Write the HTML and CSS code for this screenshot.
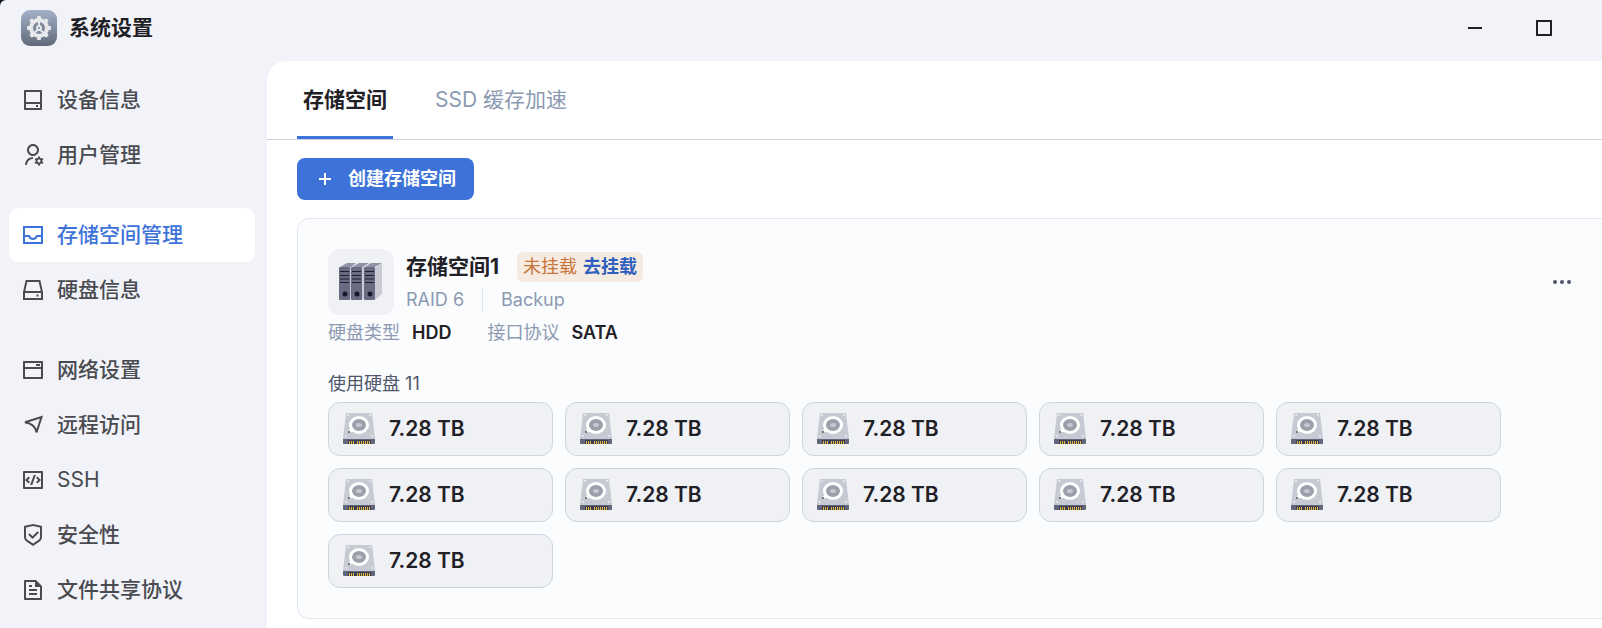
FILE: index.html
```html
<!DOCTYPE html>
<html lang="zh-CN">

<head>
    <meta charset="UTF-8">
    <meta name="viewport" content="width=device-width, initial-scale=1.0">
    <title>系统设置</title>
    <link rel="stylesheet" href="styles.css">
</head>

<body>
    <!-- 图标定义 -->
    <svg class="sprite" aria-hidden="true">
        <symbol id="icon-disk" viewBox="0 0 32 32">
            <path d="M3 0h26l3 26H0z" fill="#c7cad2" />
            <path d="M0 26h32v4a1 1 0 0 1-1 1H1a1 1 0 0 1-1-1z" fill="#62667c" />
            <path d="M5 27h23v4H5z" fill="#3b3d50" />
            <path d="M6 28h1v3H6zM8 28h1v3H8zM10 28h1v3h-1zM14 28h1v3h-1zM16 28h1v3h-1zM18 28h1v3h-1zM20 28h1v3h-1zM22 28h1v3h-1zM24 28h1v3h-1zM26 28h1v3h-1z" fill="#e5b93c" />
            <circle cx="5" cy="2" r="1" fill="#eceef2" />
            <circle cx="27" cy="2" r="1" fill="#eceef2" />
            <circle cx="3" cy="23" r="1" fill="#eceef2" />
            <circle cx="29" cy="23" r="1" fill="#eceef2" />
            <path d="M8 14l-3 6 6-2z" fill="#fff" />
            <ellipse cx="16" cy="12" rx="10" ry="9" fill="#fff" />
            <ellipse cx="16" cy="12" rx="7" ry="6" fill="#9b9faa" />
            <ellipse cx="16" cy="12" rx="3" ry="2" fill="#c5c8d0" />
            <circle cx="6" cy="19" r="1" fill="#555" />
        </symbol>
    </svg>

    <div class="window">
        <header class="titlebar">
            <svg class="app-logo" viewBox="0 0 36 36" aria-hidden="true">
                <defs>
                    <linearGradient id="logoBg" x1="0" y1="0" x2="0" y2="1">
                        <stop offset="0" stop-color="#a3b1c8" />
                        <stop offset="1" stop-color="#606a7a" />
                    </linearGradient>
                </defs>
                <rect width="36" height="36" rx="9" fill="url(#logoBg)" />
                <g fill="#e6e8eb">
                    <rect x="16" y="6" width="4" height="24" rx="1" />
                    <rect x="16" y="6" width="4" height="24" rx="1" transform="rotate(45 18 18)" />
                    <rect x="16" y="6" width="4" height="24" rx="1" transform="rotate(90 18 18)" />
                    <rect x="16" y="6" width="4" height="24" rx="1" transform="rotate(135 18 18)" />
                    <circle cx="18" cy="18" r="10" />
                </g>
                <circle cx="18" cy="18" r="6" fill="#7d889a" />
                <path d="M18 11v6M18 19l-5 4M18 19l5 4" stroke="#e6e8eb" stroke-width="2" />
                <circle cx="18" cy="18" r="3" fill="#e6e8eb" />
                <circle cx="18" cy="18" r="1" fill="#7d889a" />
            </svg>
            <h1>系统设置</h1>
            <div class="window-controls">
                <button type="button" aria-label="最小化">
                    <svg viewBox="0 0 16 16"><path d="M1 8h14" /></svg>
                </button>
                <button type="button" aria-label="最大化">
                    <svg viewBox="0 0 16 16"><path d="M1 1h14v14H1z" /></svg>
                </button>
            </div>
        </header>

        <div class="layout">
            <!-- 侧边栏 -->
            <nav class="sidebar">
                <div class="nav-group">
                    <a href="#" class="nav-item">
                        <svg viewBox="0 0 24 24"><path d="M5 14H19V4H5V14ZM5 16V20H19V16H5ZM4 2H20C20.55 2 21 2.45 21 3V21C21 21.55 20.55 22 20 22H4C3.450 22 3 21.550 3 21V3C3 2.450 3.450 2 4 2ZM15 17H17V19H15V17Z" /></svg>
                        设备信息
                    </a>
                    <a href="#" class="nav-item">
                        <svg viewBox="0 0 24 24"><path d="M12 14V16C8.686 16 6 18.686 6 22H4C4 17.582 7.582 14 12 14ZM12 13C8.685 13 6 10.315 6 7C6 3.685 8.685 1 12 1C15.315 1 18 3.685 18 7C18 10.315 15.315 13 12 13ZM12 11C14.21 11 16 9.21 16 7C16 4.79 14.21 3 12 3C9.79 3 8 4.79 8 7C8 9.21 9.79 11 12 11ZM14.595 18.812C14.533 18.551 14.5 18.279 14.5 18C14.5 17.721 14.533 17.449 14.595 17.189L13.603 16.616L14.603 14.884L15.595 15.457C15.988 15.085 16.468 14.803 17 14.645V13.5H19V14.645C19.532 14.803 20.012 15.085 20.405 15.457L21.397 14.884L22.397 16.616L21.406 17.189C21.467 17.449 21.5 17.721 21.5 18C21.5 18.279 21.467 18.551 21.406 18.811L22.397 19.384L21.397 21.116L20.405 20.543C20.012 20.915 19.533 21.197 19 21.355V22.5H17V21.355C16.468 21.197 15.988 20.915 15.595 20.543L14.603 21.116L13.603 19.384L14.595 18.812ZM18 19.5C18.828 19.5 19.5 18.828 19.5 18C19.5 17.172 18.828 16.5 18 16.5C17.172 16.5 16.5 17.172 16.5 18C16.5 18.828 17.172 19.5 18 19.5Z" /></svg>
                        用户管理
                    </a>
                </div>
                <div class="nav-group">
                    <a href="#" class="nav-item active" aria-current="page">
                        <svg viewBox="0 0 24 24" class="stroked"><path d="M3 4h18v16H3zM3 13h5c1 2 2.300 3 4 3s3-1 4-3h5" /></svg>
                        存储空间管理
                    </a>
                    <a href="#" class="nav-item">
                        <svg viewBox="0 0 24 24" class="stroked"><path d="M5.500 3h13L21 14v7H3v-7zM3 14h18M15.500 17.500h2" /></svg>
                        硬盘信息
                    </a>
                </div>
                <div class="nav-group">
                    <a href="#" class="nav-item">
                        <svg viewBox="0 0 24 24"><path d="M3 3H21C21.550 3 22 3.450 22 4V20C22 20.550 21.550 21 21 21H3C2.450 21 2 20.550 2 20V4C2 3.450 2.450 3 3 3ZM20 11H4V19H20V11ZM20 5H4V9H20V5ZM15 6H19V8H15V6Z" /></svg>
                        网络设置
                    </a>
                    <a href="#" class="nav-item">
                        <svg viewBox="0 0 24 24" class="stroked"><path d="M4 9.300L20.500 4L15.500 19.500C15 15 13 11 4 9.300Z" /></svg>
                        远程访问
                    </a>
                    <a href="#" class="nav-item nav-item-latin">
                        <svg viewBox="0 0 24 24"><path d="M3 3H21C21.550 3 22 3.450 22 4V20C22 20.550 21.550 21 21 21H3C2.450 21 2 20.550 2 20V4C2 3.450 2.450 3 3 3ZM4 5V19H20V5H4ZM20 12L16.464 15.536L15.050 14.121L17.172 12L15.050 9.879L16.464 8.464L20 12ZM6.828 12L8.950 14.121L7.536 15.536L4 12L7.536 8.464L8.950 9.879L6.828 12ZM11.244 17H9.116L12.756 7H14.884L11.244 17Z" /></svg>
                        SSH
                    </a>
                    <a href="#" class="nav-item">
                        <svg viewBox="0 0 24 24"><path d="M12 1L20.217 2.826C20.675 2.928 21 3.333 21 3.802V13.789C21 15.795 19.997 17.668 18.328 18.781L12 23L5.672 18.781C4.003 17.668 3 15.795 3 13.789V3.802C3 3.333 3.326 2.928 3.783 2.826L12 1ZM12 3.049L5 4.604V13.789C5 15.126 5.668 16.375 6.781 17.117L12 20.596L17.219 17.117C18.332 16.375 19 15.126 19 13.789V4.604L12 3.049ZM16.452 8.222L17.867 9.636L11.503 16L7.260 11.757L8.674 10.343L11.502 13.171L16.452 8.222Z" /></svg>
                        安全性
                    </a>
                    <a href="#" class="nav-item">
                        <svg viewBox="0 0 24 24"><path d="M21 8V20.993C21 21.550 20.555 22 20.007 22H3.993C3.445 22 3 21.556 3 21.008V2.992C3 2.455 3.449 2 4.002 2H14.997L21 8ZM19 9H14V4H5V20H19V9ZM8 7H11V9H8V7ZM8 11H16V13H8V11ZM8 15H16V17H8V15Z" /></svg>
                        文件共享协议
                    </a>
                </div>
            </nav>

            <!-- 主内容 -->
            <main class="content">
                <div class="tabs" role="tablist">
                    <button type="button" class="tab active" role="tab" aria-selected="true">存储空间</button>
                    <button type="button" class="tab" role="tab" aria-selected="false">SSD 缓存加速</button>
                </div>

                <div class="panel">
                    <button type="button" class="btn-create">
                        <svg viewBox="0 0 14 14" aria-hidden="true"><path d="M7 1v12M1 7h12" /></svg>
                        创建存储空间
                    </button>

                    <section class="pool">
                        <div class="pool-head">
                            <div class="pool-icon">
                                <svg viewBox="0 0 44 40" aria-hidden="true">
                                    <path d="M36 6l7-5v31l-7 6z" fill="#c9cad4" />
                                    <path d="M1 5l7-4h9l-5 4zM13 5l7-4h10l-6 4zM26 5l6-4h11l-7 4z" fill="#9093a5" />
                                    <path d="M11 5h1v32l-1 1zM23 5h2v32l-2 1z" fill="#c9cad4" />
                                    <g id="server">
                                        <rect x="0" y="5" width="11" height="33" rx="1" fill="#696c80" />
                                        <path d="M1 9.500h9M1 13.500h9M1 17h9M1 20.500h9" stroke="#1d1e30" />
                                        <circle cx="6" cy="32" r="2.500" fill="#17182a" />
                                    </g>
                                    <use href="#server" x="12" />
                                    <use href="#server" x="25" />
                                </svg>
                            </div>
                            <div class="pool-title">
                                <div class="pool-name">
                                    <h2>存储空间1</h2>
                                    <span class="badge">未挂载 <a href="#">去挂载</a></span>
                                </div>
                                <div class="pool-type">
                                    <span>RAID 6</span>
                                    <span>Backup</span>
                                </div>
                            </div>
                            <button type="button" class="btn-more" aria-label="更多">
                                <svg viewBox="0 0 24 24">
                                    <circle cx="5" cy="12" r="2" />
                                    <circle cx="12" cy="12" r="2" />
                                    <circle cx="19" cy="12" r="2" />
                                </svg>
                            </button>
                        </div>

                        <dl class="pool-info">
                            <div>
                                <dt>硬盘类型</dt>
                                <dd>HDD</dd>
                            </div>
                            <div>
                                <dt>接口协议</dt>
                                <dd>SATA</dd>
                            </div>
                        </dl>

                        <h3>使用硬盘 11</h3>
                        <ul class="disks">
                            <li><svg><use href="#icon-disk" /></svg>7.28 TB</li>
                            <li><svg><use href="#icon-disk" /></svg>7.28 TB</li>
                            <li><svg><use href="#icon-disk" /></svg>7.28 TB</li>
                            <li><svg><use href="#icon-disk" /></svg>7.28 TB</li>
                            <li><svg><use href="#icon-disk" /></svg>7.28 TB</li>
                            <li><svg><use href="#icon-disk" /></svg>7.28 TB</li>
                            <li><svg><use href="#icon-disk" /></svg>7.28 TB</li>
                            <li><svg><use href="#icon-disk" /></svg>7.28 TB</li>
                            <li><svg><use href="#icon-disk" /></svg>7.28 TB</li>
                            <li><svg><use href="#icon-disk" /></svg>7.28 TB</li>
                            <li><svg><use href="#icon-disk" /></svg>7.28 TB</li>
                        </ul>
                    </section>
                </div>
            </main>
        </div>
    </div>
</body>

</html>
```

FILE: styles.css
```css
* {
    box-sizing: border-box;
}

body {
    margin: 0;
    background: #10131c;
    font-family: Inter, "Noto Sans CJK SC", sans-serif;
    font-size: 18px;
    line-height: 24px;
    color: #1f2126;
    overflow: hidden;
}

h1,
h2,
h3,
ul,
dl,
dd {
    margin: 0;
    padding: 0;
}

button {
    font: inherit;
    color: inherit;
    background: none;
    border: none;
    padding: 0;
    cursor: pointer;
}

a {
    text-decoration: none;
}

svg {
    display: block;
    flex-shrink: 0;
}

.sprite {
    display: none;
}

.window {
    display: flex;
    flex-direction: column;
    min-height: 100vh;
    background: #f2f3f9;
    border-top-left-radius: 6px;
}

/* 标题栏 */
.titlebar {
    display: flex;
    align-items: center;
    gap: 12px;
    padding: 10px 24px 15px 21px;
}

.titlebar h1 {
    font-size: 21px;
    font-weight: 700;
}

.app-logo {
    width: 36px;
    height: 36px;
}

.window-controls {
    display: flex;
    margin-left: auto;
}

.window-controls button {
    display: flex;
    justify-content: center;
    align-items: center;
    width: 69px;
    height: 36px;
}

.window-controls svg {
    width: 16px;
    height: 16px;
    fill: none;
    stroke: #1f2126;
    stroke-width: 2;
}

.layout {
    display: flex;
    flex: 1;
}

/* 侧边栏 */
.sidebar {
    display: flex;
    flex-direction: column;
    gap: 26px;
    flex-shrink: 0;
    width: 267px;
    padding: 12px 12px 0 9px;
}

.nav-group {
    display: flex;
    flex-direction: column;
    gap: 1px;
}

.nav-item {
    display: flex;
    align-items: center;
    gap: 12px;
    height: 54px;
    padding: 0 12px;
    border-radius: 9px;
    font-size: 21px;
    font-weight: 500;
    color: #4a4b50;
}

.nav-item-latin {
    font-weight: 400;
}

.nav-item svg {
    width: 24px;
    height: 24px;
    fill: currentColor;
}

.nav-item .stroked {
    fill: none;
    stroke: currentColor;
    stroke-width: 2;
}

.nav-item.active {
    background: #fff;
    color: #3d73d9;
}

/* 主内容 */
.content {
    flex: 1;
    min-width: 0;
    background: #fff;
    border-top-left-radius: 20px;
    overflow: hidden;
}

.tabs {
    display: flex;
    gap: 36px;
    padding: 0 30px;
    border-bottom: 1px solid #ccd3df;
}

.tab {
    height: 78px;
    padding: 3px 6px 0;
    border-bottom: 3px solid transparent;
    font-size: 21px;
    color: #8c9ab2;
}

.tab.active {
    border-bottom-color: #3d73d9;
    font-weight: 700;
    color: #1f2126;
}

.panel {
    padding: 18px 0 10px 30px;
}

.btn-create {
    display: flex;
    align-items: center;
    gap: 16px;
    height: 42px;
    padding: 0 18px 0 21px;
    border-radius: 8px;
    background: #3d73d9;
    color: #fff;
    font-weight: 700;
}

.btn-create svg {
    width: 14px;
    height: 14px;
    fill: none;
    stroke: #fff;
    stroke-width: 2;
}

/* 存储池卡片 */
.pool {
    margin: 18px -18px 0 0;
    padding: 30px;
    border: 1px solid #e1e6ed;
    border-radius: 12px;
    background: #fbfcfe;
}

.pool-head {
    display: flex;
    align-items: center;
    gap: 12px;
    padding-right: 9px;
}

.pool-icon {
    display: flex;
    justify-content: center;
    align-items: center;
    width: 66px;
    height: 66px;
    border-radius: 12px;
    background: #f0f1f5;
}

.pool-icon svg {
    width: 44px;
    height: 40px;
}

.pool-name {
    display: flex;
    align-items: center;
    gap: 18px;
}

.pool-name h2 {
    font-size: 21px;
    font-weight: 700;
}

.badge {
    display: flex;
    gap: 6px;
    padding: 3px 6px;
    border-radius: 6px;
    background: #f6ebe1;
    color: #c8743a;
}

.badge a {
    color: #315fbd;
    font-weight: 700;
}

.pool-type {
    display: flex;
    margin-top: 6px;
    color: #8c9ab2;
}

.pool-type span + span {
    margin-left: 18px;
    padding-left: 18px;
    border-left: 1px solid #dfe4ec;
}

.btn-more {
    margin-left: auto;
    padding: 6px;
}

.btn-more svg {
    width: 24px;
    height: 24px;
    fill: #4f566b;
}

.pool-info {
    display: flex;
    gap: 36px;
    margin-top: 6px;
}

.pool-info div {
    display: flex;
    gap: 12px;
}

.pool-info dt {
    color: #8c9ab2;
}

.pool-info dd {
    font-weight: 600;
}

.pool h3 {
    margin: 27px 0 6px;
    font-size: 18px;
    font-weight: 400;
    color: #4f566b;
}

.disks {
    display: grid;
    grid-template-columns: repeat(auto-fill, 225px);
    gap: 12px;
    list-style: none;
}

.disks li {
    display: flex;
    align-items: center;
    gap: 14px;
    height: 54px;
    padding: 0 14px;
    border: 1px solid #ccd5e0;
    border-radius: 12px;
    background: #f0f1f5;
    font-size: 21px;
    font-weight: 600;
}

.disks svg {
    width: 32px;
    height: 32px;
}
```
